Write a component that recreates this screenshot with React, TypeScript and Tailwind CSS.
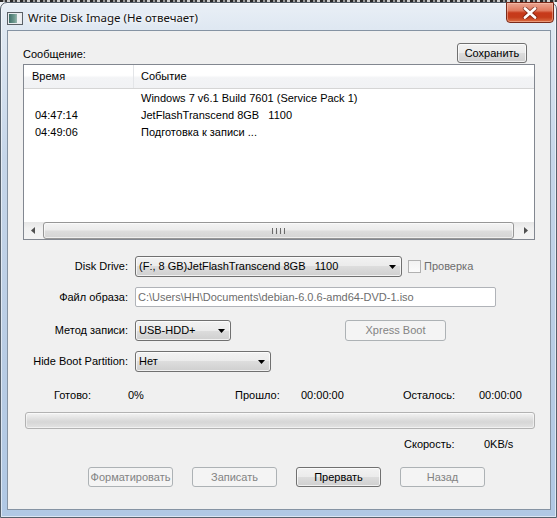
import React from "react";

const btnOn =
  "flex items-center justify-center border border-[#707070] rounded-[3px] bg-[linear-gradient(#f2f2f2,#ebebeb_50%,#dddddd_50%,#cfcfcf)] text-black shadow-[inset_0_0_0_1px_rgba(255,255,255,0.7)]";
const btnOff =
  "flex items-center justify-center border border-[#adb2b5] rounded-[3px] bg-[#f4f4f4] text-[#838383]";
const comboBase =
  "flex items-center justify-between border border-[#707070] rounded-[3px] bg-[linear-gradient(#f2f2f2,#ebebeb_50%,#dddddd_50%,#cfcfcf)] text-black shadow-[inset_0_0_0_1px_rgba(255,255,255,0.7)]";

function Arrow() {
  return (
    <svg width="7" height="4" viewBox="0 0 7 4" className="shrink-0">
      <path d="M0 0H7L3.5 4Z" fill="#000" />
    </svg>
  );
}

function Combo({ cls, text }: { cls: string; text: string }) {
  return (
    <div className={`${comboBase} ${cls} h-[21px] pl-[3px] pr-[5px]`}>
      <span className="whitespace-pre">{text}</span>
      <Arrow />
    </div>
  );
}

function Label({ text }: { text: string }) {
  return <div className="w-[120px] text-right whitespace-pre">{text}</div>;
}

function AppIcon() {
  return (
    <svg width="16" height="13" viewBox="0 0 16 13">
      <defs>
        <linearGradient id="ico" x1="0" x2="1" y1="0" y2="0">
          <stop offset="0" stopColor="#3f6f6a" />
          <stop offset="0.45" stopColor="#6e9a8f" />
          <stop offset="1" stopColor="#d8dde0" />
        </linearGradient>
      </defs>
      <rect x="0.5" y="0.5" width="15" height="12" fill="#e9ecef" stroke="#5a6066" />
      <rect x="2" y="2" width="12" height="9" fill="url(#ico)" />
      <rect x="10" y="2" width="4" height="9" fill="#eef0f2" />
    </svg>
  );
}

function CloseGlyph() {
  return (
    <svg width="16" height="12" viewBox="0 0 16 12">
      <path d="M3 1.5L13 10.5M13 1.5L3 10.5" stroke="#5b1a0e" strokeWidth="4.4" strokeLinecap="round" opacity="0.6" />
      <path d="M3 1.5L13 10.5M13 1.5L3 10.5" stroke="#ffffff" strokeWidth="2.7" strokeLinecap="round" />
    </svg>
  );
}

export default function App() {
  return (
    <div className="w-[557px] h-[518px] overflow-hidden bg-[#eef2f6] font-['Liberation_Sans',Arial,sans-serif] text-[11px] leading-[13px] text-black">
      {/* desktop content peeking above the window */}
      <div className="h-[2px] bg-[repeating-linear-gradient(90deg,#2a2a2a_0_3px,#9a9a9a_3px_5px,#3a3a3a_5px_7px,#d0d0d0_7px_10px)]" />

      {/* window frame */}
      <div className="h-[516px] flex flex-col rounded-t-[7px] border border-[#56606b] bg-[linear-gradient(180deg,#e9eff6_0%,#dfe8f2_5%,#c6d6e9_30%,#b8cce4_70%,#b0c8e4_100%)] shadow-[inset_0_0_0_1px_rgba(255,255,255,0.55)]">
        {/* title bar */}
        <div className="h-[27px] flex items-start">
          <div className="flex items-center gap-[5px] pl-[6px] pt-[8px]">
            <AppIcon />
            <span className="font-['Noto_Sans',sans-serif] text-[11.5px] leading-[14px] text-[#111] [text-shadow:0_0_6px_#fff,0_0_3px_#fff]">
              Write Disk Image (Не отвечает)
            </span>
          </div>
          <div className="ml-auto mr-[2px] -mt-[1px] w-[48px] h-[21px] flex items-center justify-center rounded-b-[4px] border border-[#7a2a1a] bg-[linear-gradient(#eba592,#e07a5e_40%,#c73a1a_52%,#c53c1a_75%,#dc6f44)] shadow-[inset_0_0_0_1px_rgba(255,210,190,0.45)]">
            <CloseGlyph />
          </div>
        </div>

        {/* client area */}
        <div className="ml-[6px] w-[544px] h-[480px] border border-[#8593a3] bg-[#f0f0f0] flex flex-col">
          {/* messages header */}
          <div className="flex items-end justify-between pl-[15px] pr-[23px] pt-[12px]">
            <span className="pb-[2px]">Сообщение:</span>
            <div className={`${btnOn} w-[70px] h-[20px]`}>Сохранить</div>
          </div>

          {/* log list */}
          <div className="mt-[1px] ml-[15px] w-[512px] h-[176px] border border-[#828790] bg-white flex flex-col">
            <div className="h-[24px] flex border-b border-[#d5d5d5] bg-[linear-gradient(#ffffff,#ffffff_45%,#f3f4f6_55%,#f1f2f4)]">
              <div className="w-[110px] flex items-center pl-[8px] border-r border-[#e3e5e8]">Время</div>
              <div className="flex items-center pl-[7px]">Событие</div>
            </div>
            <div className="flex-1 pt-[1px]">
              {[
                ["", "Windows 7 v6.1 Build 7601 (Service Pack 1)"],
                ["04:47:14", "JetFlashTranscend 8GB   1100"],
                ["04:49:06", "Подготовка к записи ..."],
              ].map(([t, e], i) => (
                <div key={i} className="h-[17px] flex items-center">
                  <div className="w-[117px] pl-[11px]">{t}</div>
                  <div className="whitespace-pre">{e}</div>
                </div>
              ))}
            </div>
            {/* horizontal scrollbar */}
            <div className="h-[17px] flex bg-[linear-gradient(#e6e6e6,#f1f1f1_40%,#f3f3f3)]">
              <div className="w-[17px] flex items-center justify-center">
                <svg width="4" height="7" viewBox="0 0 4 7">
                  <path d="M4 0V7L0 3.5Z" fill="#505050" />
                </svg>
              </div>
              <div className="flex-1 pl-[2px] pr-[3px]">
                <div className="h-full rounded-[3px] border border-[#979797] bg-[linear-gradient(#f4f4f4,#ececec_45%,#dcdcdc_55%,#d4d4d4)] flex items-center justify-center gap-[1px] shadow-[inset_0_0_0_1px_rgba(255,255,255,0.6)]">
                  <div className="w-[1px] h-[6px] bg-[#6a6a6a]" />
                  <div className="w-[1px] h-[6px] bg-[#e8e8e8]" />
                  <div className="w-[1px] h-[6px] bg-[#6a6a6a]" />
                  <div className="w-[1px] h-[6px] bg-[#e8e8e8]" />
                  <div className="w-[1px] h-[6px] bg-[#6a6a6a]" />
                  <div className="w-[1px] h-[6px] bg-[#e8e8e8]" />
                  <div className="w-[1px] h-[6px] bg-[#6a6a6a]" />
                </div>
              </div>
              <div className="w-[17px] flex items-center justify-center">
                <svg width="4" height="7" viewBox="0 0 4 7">
                  <path d="M0 0V7L4 3.5Z" fill="#505050" />
                </svg>
              </div>
            </div>
          </div>

          {/* settings */}
          <div className="mt-[16px] flex items-center gap-[7px]">
            <Label text="Disk Drive:" />
            <Combo cls="w-[267px]" text="(F:, 8 GB)JetFlashTranscend 8GB   1100" />
            <div className="ml-[-1px] flex items-center gap-[3px] text-[#6d6d6d]">
              <div className="w-[13px] h-[13px] border border-[#b1b1b1] bg-[linear-gradient(#f2f2f2,#fbfbfb)]" />
              <span>Проверка</span>
            </div>
          </div>

          <div className="mt-[10px] flex items-center gap-[7px]">
            <Label text="Файл образа:" />
            <div className="w-[361px] h-[20px] flex items-center pl-[2px] rounded-[2px] border border-[#b0b3b8] bg-white text-[#6d6d6d]">
              C:\Users\HH\Documents\debian-6.0.6-amd64-DVD-1.iso
            </div>
          </div>

          <div className="mt-[13px] flex items-center gap-[7px]">
            <Label text="Метод записи:" />
            <Combo cls="w-[96px]" text="USB-HDD+" />
            <div className={`${btnOff} ml-[107px] w-[101px] h-[21px]`}>Xpress Boot</div>
          </div>

          <div className="mt-[10px] flex items-center gap-[7px]">
            <Label text="Hide Boot Partition:" />
            <Combo cls="w-[136px]" text="Нет" />
          </div>

          {/* progress */}
          <div className="mt-[17px] flex pl-[46px]">
            <div className="w-[74px]">Готово:</div>
            <div className="w-[107px]">0%</div>
            <div className="w-[66px]">Прошло:</div>
            <div className="w-[102px]">00:00:00</div>
            <div className="w-[76px]">Осталось:</div>
            <div>00:00:00</div>
          </div>

          <div className="mt-[10px] ml-[17px] w-[510px] h-[17px] rounded-[3px] border border-[#b2b2b2] bg-[linear-gradient(#f4f4f4,#e2e2e2_35%,#d6d6d6_60%,#e3e3e3)] shadow-[inset_0_0_0_1px_rgba(255,255,255,0.5)]" />

          <div className="mt-[9px] flex pl-[396px]">
            <div className="w-[80px]">Скорость:</div>
            <div>0KB/s</div>
          </div>

          {/* action buttons */}
          <div className="mt-[16px] flex pl-[80px] gap-[19px]">
            <div className={`${btnOff} w-[85px] h-[20px]`}>Форматировать</div>
            <div className={`${btnOff} w-[85px] h-[20px]`}>Записать</div>
            <div className={`${btnOn} w-[85px] h-[20px]`}>Прервать</div>
            <div className={`${btnOff} w-[85px] h-[20px]`}>Назад</div>
          </div>
        </div>
      </div>
    </div>
  );
}
